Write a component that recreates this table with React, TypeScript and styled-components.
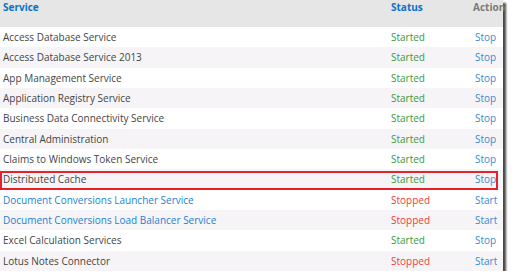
import React from "react";
import styled, { createGlobalStyle } from "styled-components";

const Global = createGlobalStyle`
  html, body { margin: 0; padding: 0; background: #ffffff; }
  body { font-family: "Open Sans", "Noto Sans", sans-serif; }
`;

const Table = styled.div`
  width: 503px;
  display: flex;
  flex-direction: column;
  background: #ffffff;
  box-shadow: 3px 3px 2px rgba(40, 40, 40, 0.85);
`;

const Header = styled.div`
  display: grid;
  grid-template-columns: 391px 82px 30px;
  height: 27px;
  background: #e6e6e6;
  font-size: 10px;
  font-weight: 700;
  line-height: 15px;
`;

const HeadCell = styled.div<{ $muted?: boolean; $pad?: number }>`
  padding-left: ${(p) => p.$pad ?? 0}px;
  color: ${(p) => (p.$muted ? "#7a7a7a" : "#0a72c8")};
  white-space: nowrap;
`;

const Row = styled.div<{ $alt: boolean; $hl?: boolean }>`
  position: relative;
  display: grid;
  grid-template-columns: 391px 84px 1fr;
  height: 20.33px;
  align-items: center;
  background: ${(p) => (p.$alt ? "#f6f4f7" : "#ffffff")};
  font-size: 10px;
  &::after {
    content: "";
    display: ${(p) => (p.$hl ? "block" : "none")};
    position: absolute;
    left: 0;
    top: 2px;
    width: 498px;
    height: 19px;
    box-sizing: border-box;
    border: 2px solid #e8202a;
  }
`;

const Name = styled.div<{ $link?: boolean }>`
  padding-left: 3px;
  color: ${(p) => (p.$link ? "#1a82cf" : "#444444")};
  white-space: nowrap;
`;

const Status = styled.div<{ $on: boolean }>`
  color: ${(p) => (p.$on ? "#3a9a3a" : "#f03c3c")};
`;

const Action = styled.div`
  color: #3a8ad0;
`;

type Svc = { name: string; on: boolean; link?: boolean; hl?: boolean };

const services: Svc[] = [
  { name: "Access Database Service", on: true },
  { name: "Access Database Service 2013", on: true },
  { name: "App Management Service", on: true },
  { name: "Application Registry Service", on: true },
  { name: "Business Data Connectivity Service", on: true },
  { name: "Central Administration", on: true },
  { name: "Claims to Windows Token Service", on: true },
  { name: "Distributed Cache", on: true, hl: true },
  { name: "Document Conversions Launcher Service", on: false, link: true },
  { name: "Document Conversions Load Balancer Service", on: false, link: true },
  { name: "Excel Calculation Services", on: true },
  { name: "Lotus Notes Connector", on: false },
];

export default function App() {
  return (
    <>
      <Global />
      <Table>
        <Header>
          <HeadCell $pad={3}>Service</HeadCell>
          <HeadCell>Status</HeadCell>
          <HeadCell $muted>Action</HeadCell>
        </Header>
        {services.map((s, i) => (
          <Row key={s.name} $alt={i % 2 === 1} $hl={s.hl}>
            <Name $link={s.link}>{s.name}</Name>
            <Status $on={s.on}>{s.on ? "Started" : "Stopped"}</Status>
            <Action>{s.on ? "Stop" : "Start"}</Action>
          </Row>
        ))}
      </Table>
    </>
  );
}
